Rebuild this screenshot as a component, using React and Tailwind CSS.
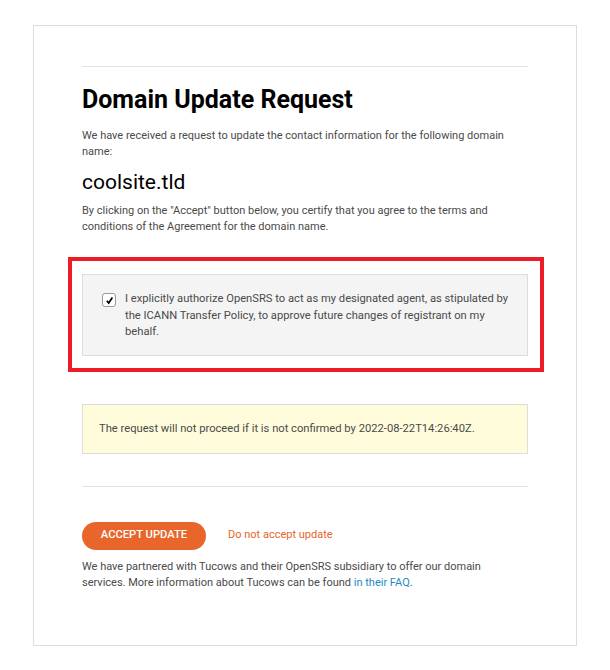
import React from 'react';

const App = () => {
  return (
    <div className="min-h-[670px] bg-white pt-[25px] pb-[24px]" style={{ fontFamily: 'Roboto, "Liberation Sans", sans-serif' }}>
      <div className="mx-auto w-[544px] border border-[#dddddd] px-[48px] pt-[40px] pb-[54px]">
        <hr className="border-0 border-t border-[#e2e2e2]" />
        <h1 className="mt-[18px] text-[25px] leading-[29px] font-bold text-black">Domain Update Request</h1>
        <p className="mt-[14px] text-[11px] leading-[16px] text-[#4a4a4a]">
          We have received a request to update the contact information for the following domain name:
        </p>
        <div className="mt-[10px] text-[21px] leading-[25px] text-black">coolsite.tld</div>
        <p className="mt-[8px] text-[11px] leading-[16px] text-[#4a4a4a]">
          By clicking on the "Accept" button below, you certify that you agree to the terms and conditions of the Agreement for the domain name.
        </p>

        <div className="-ml-[14px] -mr-[16px] mt-[22px] border-[4px] border-[#ee1c25] pl-[10px] pr-[12px] pt-[13px] pb-[12px]">
          <div className="flex items-start border border-[#dddddd] bg-[#f4f4f4] pl-[19px] pr-[14px] pt-[16px] pb-[14px]">
            <span className="mt-[2px] flex h-[14px] w-[14px] shrink-0 items-center justify-center rounded-[3px] border border-[#9a9a9a] bg-white">
              <svg width="9" height="9" viewBox="0 0 10 10">
                <path d="M2 5.2 L4.1 7.8 L8.2 1.6" fill="none" stroke="#000" strokeWidth="1.8" />
              </svg>
            </span>
            <label className="ml-[9px] text-[11.2px] leading-[16.5px] text-[#4a4a4a]">
              I explicitly authorize OpenSRS to act as my designated agent, as stipulated by the ICANN Transfer Policy, to approve future changes of registrant on my behalf.
            </label>
          </div>
        </div>

        <div className="mt-[32px] border border-[#dddddd] bg-[#fffcdc] px-[16px] py-[16px] text-[11.2px] leading-[16px] text-[#4a4a4a]">
          The request will not proceed if it is not confirmed by 2022-08-22T14:26:40Z.
        </div>

        <hr className="mt-[32px] border-0 border-t border-[#e2e2e2]" />

        <div className="mt-[35px] flex items-center">
          <button type="button" className="h-[28px] w-[124px] rounded-full bg-[#e8652b] text-[11.2px] font-medium text-white">
            ACCEPT UPDATE
          </button>
          <a href="#" className="ml-[22px] text-[11px] text-[#e8652b]">Do not accept update</a>
        </div>
        <p className="mt-[9px] pr-[20px] text-[11px] leading-[16px] text-[#4a4a4a]">
          We have partnered with Tucows and their OpenSRS subsidiary to offer our domain services. More information about Tucows can be found{' '}
          <a href="#" className="text-[#1d8ac5]">in their FAQ</a>.
        </p>
      </div>
    </div>
  );
};

export default App;
